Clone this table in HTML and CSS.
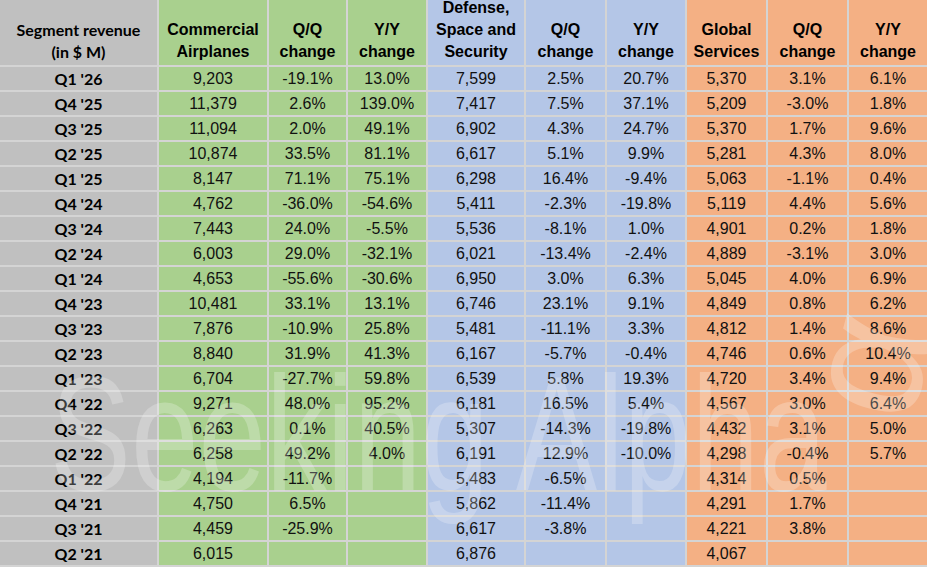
FILE: index.html
```html
<!DOCTYPE html>
<html>
<head>
<meta charset="utf-8">
<link rel="stylesheet" href="styles.css">
</head>
<body>
<div class="sheet">
  <div class="grid">
    <div class="h lab"><span>Segment revenue</span><span>(in $ M)</span></div>
    <div class="h g"><span>Commercial</span><span>Airplanes</span></div>
    <div class="h g"><span>Q/Q</span><span>change</span></div>
    <div class="h g"><span>Y/Y</span><span>change</span></div>
    <div class="h b"><span>Defense,</span><span>Space and</span><span>Security</span></div>
    <div class="h b"><span>Q/Q</span><span>change</span></div>
    <div class="h b"><span>Y/Y</span><span>change</span></div>
    <div class="h o"><span>Global</span><span>Services</span></div>
    <div class="h o"><span>Q/Q</span><span>change</span></div>
    <div class="h o"><span>Y/Y</span><span>change</span></div>

    <div class="c lab">Q1 '26</div><div class="c g">9,203</div><div class="c g">-19.1%</div><div class="c g">13.0%</div><div class="c b">7,599</div><div class="c b">2.5%</div><div class="c b">20.7%</div><div class="c o">5,370</div><div class="c o">3.1%</div><div class="c o">6.1%</div>
    <div class="c lab">Q4 '25</div><div class="c g">11,379</div><div class="c g">2.6%</div><div class="c g">139.0%</div><div class="c b">7,417</div><div class="c b">7.5%</div><div class="c b">37.1%</div><div class="c o">5,209</div><div class="c o">-3.0%</div><div class="c o">1.8%</div>
    <div class="c lab">Q3 '25</div><div class="c g">11,094</div><div class="c g">2.0%</div><div class="c g">49.1%</div><div class="c b">6,902</div><div class="c b">4.3%</div><div class="c b">24.7%</div><div class="c o">5,370</div><div class="c o">1.7%</div><div class="c o">9.6%</div>
    <div class="c lab">Q2 '25</div><div class="c g">10,874</div><div class="c g">33.5%</div><div class="c g">81.1%</div><div class="c b">6,617</div><div class="c b">5.1%</div><div class="c b">9.9%</div><div class="c o">5,281</div><div class="c o">4.3%</div><div class="c o">8.0%</div>
    <div class="c lab">Q1 '25</div><div class="c g">8,147</div><div class="c g">71.1%</div><div class="c g">75.1%</div><div class="c b">6,298</div><div class="c b">16.4%</div><div class="c b">-9.4%</div><div class="c o">5,063</div><div class="c o">-1.1%</div><div class="c o">0.4%</div>
    <div class="c lab">Q4 '24</div><div class="c g">4,762</div><div class="c g">-36.0%</div><div class="c g">-54.6%</div><div class="c b">5,411</div><div class="c b">-2.3%</div><div class="c b">-19.8%</div><div class="c o">5,119</div><div class="c o">4.4%</div><div class="c o">5.6%</div>
    <div class="c lab">Q3 '24</div><div class="c g">7,443</div><div class="c g">24.0%</div><div class="c g">-5.5%</div><div class="c b">5,536</div><div class="c b">-8.1%</div><div class="c b">1.0%</div><div class="c o">4,901</div><div class="c o">0.2%</div><div class="c o">1.8%</div>
    <div class="c lab">Q2 '24</div><div class="c g">6,003</div><div class="c g">29.0%</div><div class="c g">-32.1%</div><div class="c b">6,021</div><div class="c b">-13.4%</div><div class="c b">-2.4%</div><div class="c o">4,889</div><div class="c o">-3.1%</div><div class="c o">3.0%</div>
    <div class="c lab">Q1 '24</div><div class="c g">4,653</div><div class="c g">-55.6%</div><div class="c g">-30.6%</div><div class="c b">6,950</div><div class="c b">3.0%</div><div class="c b">6.3%</div><div class="c o">5,045</div><div class="c o">4.0%</div><div class="c o">6.9%</div>
    <div class="c lab">Q4 '23</div><div class="c g">10,481</div><div class="c g">33.1%</div><div class="c g">13.1%</div><div class="c b">6,746</div><div class="c b">23.1%</div><div class="c b">9.1%</div><div class="c o">4,849</div><div class="c o">0.8%</div><div class="c o">6.2%</div>
    <div class="c lab">Q3 '23</div><div class="c g">7,876</div><div class="c g">-10.9%</div><div class="c g">25.8%</div><div class="c b">5,481</div><div class="c b">-11.1%</div><div class="c b">3.3%</div><div class="c o">4,812</div><div class="c o">1.4%</div><div class="c o">8.6%</div>
    <div class="c lab">Q2 '23</div><div class="c g">8,840</div><div class="c g">31.9%</div><div class="c g">41.3%</div><div class="c b">6,167</div><div class="c b">-5.7%</div><div class="c b">-0.4%</div><div class="c o">4,746</div><div class="c o">0.6%</div><div class="c o">10.4%</div>
    <div class="c lab">Q1 '23</div><div class="c g">6,704</div><div class="c g">-27.7%</div><div class="c g">59.8%</div><div class="c b">6,539</div><div class="c b">5.8%</div><div class="c b">19.3%</div><div class="c o">4,720</div><div class="c o">3.4%</div><div class="c o">9.4%</div>
    <div class="c lab">Q4 '22</div><div class="c g">9,271</div><div class="c g">48.0%</div><div class="c g">95.2%</div><div class="c b">6,181</div><div class="c b">16.5%</div><div class="c b">5.4%</div><div class="c o">4,567</div><div class="c o">3.0%</div><div class="c o">6.4%</div>
    <div class="c lab">Q3 '22</div><div class="c g">6,263</div><div class="c g">0.1%</div><div class="c g">40.5%</div><div class="c b">5,307</div><div class="c b">-14.3%</div><div class="c b">-19.8%</div><div class="c o">4,432</div><div class="c o">3.1%</div><div class="c o">5.0%</div>
    <div class="c lab">Q2 '22</div><div class="c g">6,258</div><div class="c g">49.2%</div><div class="c g">4.0%</div><div class="c b">6,191</div><div class="c b">12.9%</div><div class="c b">-10.0%</div><div class="c o">4,298</div><div class="c o">-0.4%</div><div class="c o">5.7%</div>
    <div class="c lab">Q1 '22</div><div class="c g">4,194</div><div class="c g">-11.7%</div><div class="c g"></div><div class="c b">5,483</div><div class="c b">-6.5%</div><div class="c b"></div><div class="c o">4,314</div><div class="c o">0.5%</div><div class="c o"></div>
    <div class="c lab">Q4 '21</div><div class="c g">4,750</div><div class="c g">6.5%</div><div class="c g"></div><div class="c b">5,862</div><div class="c b">-11.4%</div><div class="c b"></div><div class="c o">4,291</div><div class="c o">1.7%</div><div class="c o"></div>
    <div class="c lab">Q3 '21</div><div class="c g">4,459</div><div class="c g">-25.9%</div><div class="c g"></div><div class="c b">6,617</div><div class="c b">-3.8%</div><div class="c b"></div><div class="c o">4,221</div><div class="c o">3.8%</div><div class="c o"></div>
    <div class="c lab">Q2 '21</div><div class="c g">6,015</div><div class="c g"></div><div class="c g"></div><div class="c b">6,876</div><div class="c b"></div><div class="c b"></div><div class="c o">4,067</div><div class="c o"></div><div class="c o"></div>
  </div>
  <div class="wm">Seeking Alpha</div>
  <div class="wm-alpha">α</div>
</div>
</body>
</html>
```
FILE: styles.css
```css
html, body {
  margin: 0;
  padding: 0;
  background: #ffffff;
}
.sheet {
  position: relative;
  width: 927px;
  height: 568px;
  overflow: hidden;
}
.grid {
  display: grid;
  grid-template-columns: 157px 108px 77px 78px 96px 79px 78px 79px 79px 78px;
  grid-template-rows: 65px repeat(20, 23px);
  gap: 2px;
  padding-bottom: 2px;
  background: #d4d4d4;
  font-family: "Liberation Sans", Arial, sans-serif;
  font-size: 16px;
  color: #111111;
}
.lab { background: #c0c0c0; }
.g { background: #a9d08e; }
.b { background: #b4c6e7; }
.o { background: #f4b084; }
.h {
  display: flex;
  flex-direction: column;
  justify-content: flex-end;
  align-items: center;
  font-weight: bold;
  line-height: 22px;
  padding-bottom: 2px;
  overflow: visible;
  color: #000000;
}
.h.lab {
  font-family: Lato, "Open Sans", sans-serif;
  font-size: 16px;
}
.c {
  display: flex;
  align-items: center;
  justify-content: center;
  line-height: 23px;
  white-space: nowrap;
}
.c.lab {
  font-family: Lato, "Open Sans", sans-serif;
  font-weight: bold;
  color: #000000;
}
.wm {
  position: absolute;
  left: 50px;
  top: 352px;
  font-family: "Liberation Sans", Arial, sans-serif;
  font-size: 163px;
  line-height: 1;
  white-space: nowrap;
  color: rgba(255, 255, 255, 0.24);
  transform: scaleX(0.745);
  transform-origin: left top;
  pointer-events: none;
}
.wm-alpha {
  position: absolute;
  left: 830px;
  top: 268px;
  width: 100px;
  height: 170px;
  text-align: center;
  font-family: "Liberation Sans", Arial, sans-serif;
  font-size: 170px;
  line-height: 1;
  color: rgba(255, 255, 255, 0.24);
  transform: rotate(-75deg);
  transform-origin: 50% 100px;
  pointer-events: none;
}
```
